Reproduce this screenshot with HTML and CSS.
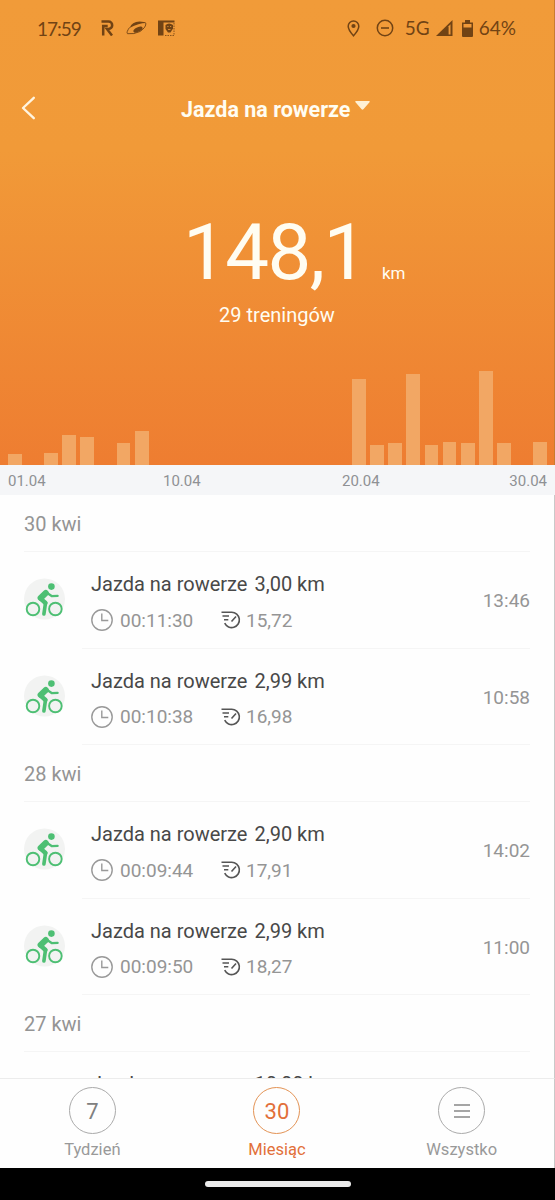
FILE: index.html
```html
<!DOCTYPE html>
<html lang="pl">
<head>
    <meta charset="UTF-8">
    <meta name="viewport" content="width=device-width, initial-scale=1.0">
    <title>Jazda na rowerze</title>
    <link rel="stylesheet" href="styles.css">
</head>
<body>
    <!-- Shared icons -->
    <svg class="icon-defs" width="0" height="0">
        <symbol id="bike" viewBox="0 0 42 42">
            <circle cx="20.5" cy="21" r="20.5" fill="#f2f3f2"/>
            <circle cx="27.4" cy="8.6" r="3.3" fill="#4dbf73"/>
            <g fill="none" stroke="#4dbf73" stroke-linecap="round" stroke-linejoin="round">
                <circle cx="9" cy="31" r="6.3" stroke-width="1.9"/>
                <circle cx="31.4" cy="31" r="6.3" stroke-width="1.9"/>
                <path d="M22.8 14.8L28 18.2 33.600 17.900" stroke-width="2.300"/>
                <path d="M21.800 15L16.600 20" stroke-width="6"/>
                <path d="M16.600 20.600L21.500 25" stroke-width="4.400"/>
                <path d="M21.500 25L19.900 36" stroke-width="3.600"/>
            </g>
        </symbol>
        <symbol id="clock" viewBox="0 0 22 22">
            <g fill="none" stroke="#999" stroke-width="1.4">
                <circle cx="11" cy="11" r="10.2"/>
                <path d="M10.8 4.5v7h6.5"/>
            </g>
        </symbol>
        <symbol id="speed" viewBox="0 0 20 18">
            <g fill="none" stroke="#555" stroke-width="1.6">
                <path d="M.5 1.2h10.200a7.700 7.700 0 1 1-7 11"/>
                <path d="M1.500 5h6.500M3 8.700h4.300M10.500 10.500l4.500-5"/>
            </g>
        </symbol>
    </svg>

    <div class="screen">
        <header class="summary">
            <div class="status-bar">
                <div class="status-left">
                    <span class="status-time">17:59</span>
                    <svg class="ico-r" width="13" height="16" viewBox="0 0 13 16"><path d="M.5 1.600h7a3.600 3.600 0 0 1 0 7.400H6l5 6.500M2.200 15.500V6h4.500" fill="none" stroke="#714314" stroke-width="2.500"/></svg>
                    <svg class="ico-orbit" width="21" height="14" viewBox="0 0 21 14"><path d="M3.500 7Q6 .5 13.500.5 19 .5 20 2 13 2 3.500 7z" fill="#714314"/><path d="M3.500 6.500Q0 11.500 1.500 12.700 8 13.500 14 10.500 20.500 6 19.800 2" fill="none" stroke="#714314" stroke-width=".9"/><ellipse cx="12" cy="8.600" rx="5" ry="2.200" transform="rotate(-26 12 8.600)" fill="#714314"/></svg>
                    <svg width="17" height="16" viewBox="0 0 17 16"><path d="M0 .5h16.500v2H5.500v13H0z" fill="#714314"/><path d="M7.500 5q3.500-3 7.500 0v3.500L12.500 12.500h-2.500L7.500 9z" fill="#714314"/><path d="M9.300 6.500h1.200M12 6.500h1.200M10 9.500h2.500" stroke="#f09a3a" stroke-width=".8"/><path d="M16 3v12.500H6" fill="none" stroke="#714314" stroke-width=".8" stroke-dasharray="1.500 1"/></svg>
                </div>
                <div class="status-right">
                    <svg class="ico-pin" width="13" height="17" viewBox="0 0 13 17"><path d="M6.500 1A5.300 5.300 0 0 0 1.200 6.300C1.200 10 6.500 15.800 6.500 15.800S11.800 10 11.800 6.300A5.300 5.300 0 0 0 6.500 1z" fill="none" stroke="#714314" stroke-width="1.500"/><circle cx="6.500" cy="6" r="2.100" fill="#714314"/></svg>
                    <svg class="ico-dnd" width="18" height="18" viewBox="0 0 18 18"><circle cx="9" cy="9" r="7.700" fill="none" stroke="#714314" stroke-width="1.500"/><path d="M5 9h8" stroke="#714314" stroke-width="1.600"/></svg>
                    <span class="network">5G</span>
                    <svg class="ico-signal" width="17" height="16" viewBox="0 0 17 16"><path d="M0 16L16.500 0V16z" fill="#714314"/><path d="M12.600 6.300l1.900-2V14.500h-1.900z" fill="#f09a3a"/></svg>
                    <svg class="ico-battery" width="11" height="17" viewBox="0 0 11 17"><path d="M0 2.500h3V0h5v2.500h3V16q0 1-1 1H1q-1 0-1-1z" fill="#714314"/><path d="M1.500 4h8v3.500h-8z" fill="#f09a3a"/></svg>
                    <span class="percent">64%</span>
                </div>
            </div>

            <nav class="title-bar">
                <svg class="back" width="15" height="24" viewBox="0 0 15 24"><path d="M12.800 1.800L2 12l10.800 10.200" fill="none" stroke="#fff4df" stroke-width="2.400" stroke-linecap="round" stroke-linejoin="round"/></svg>
                <h1>Jazda na rowerze</h1>
                <svg class="caret" width="15" height="9" viewBox="0 0 15 9"><path d="M.8 0h13.400q1 .4.300 1.200L8.400 8.300q-.9.800-1.800 0L.5 1.200Q-.1.300.8 0z" fill="#fff0d4"/></svg>
            </nav>

            <div class="total">
                <span class="total-value">148,1</span>
                <span class="total-unit">km</span>
            </div>
            <p class="count">29 treningów</p>

            <!-- One column per day of the month -->
            <div class="chart">
                <i style="height: 11px"></i>
                <i></i>
                <i style="height: 12px"></i>
                <i style="height: 30px"></i>
                <i style="height: 28px"></i>
                <i></i>
                <i style="height: 22px"></i>
                <i style="height: 34px"></i>
                <i></i><i></i><i></i><i></i><i></i><i></i><i></i><i></i><i></i><i></i><i></i>
                <i style="height: 86px"></i>
                <i style="height: 20px"></i>
                <i style="height: 22px"></i>
                <i style="height: 91px"></i>
                <i style="height: 20px"></i>
                <i style="height: 23px"></i>
                <i style="height: 22px"></i>
                <i style="height: 94px"></i>
                <i style="height: 22px"></i>
                <i></i>
                <i style="height: 23px"></i>
            </div>
        </header>

        <div class="axis">
            <span>01.04</span>
            <span>10.04</span>
            <span>20.04</span>
            <span>30.04</span>
        </div>

        <main class="list">
            <h2>30 kwi</h2>
            <article class="workout">
                <svg class="bike"><use href="#bike"/></svg>
                <div class="info">
                    <div class="name"><span>Jazda na rowerze</span><span>3,00 km</span></div>
                    <div class="stats">
                        <svg class="clock"><use href="#clock"/></svg><span class="duration">00:11:30</span>
                        <svg class="speed"><use href="#speed"/></svg><span>15,72</span>
                    </div>
                </div>
                <time>13:46</time>
            </article>
            <article class="workout">
                <svg class="bike"><use href="#bike"/></svg>
                <div class="info">
                    <div class="name"><span>Jazda na rowerze</span><span>2,99 km</span></div>
                    <div class="stats">
                        <svg class="clock"><use href="#clock"/></svg><span class="duration">00:10:38</span>
                        <svg class="speed"><use href="#speed"/></svg><span>16,98</span>
                    </div>
                </div>
                <time>10:58</time>
            </article>

            <h2>28 kwi</h2>
            <article class="workout">
                <svg class="bike"><use href="#bike"/></svg>
                <div class="info">
                    <div class="name"><span>Jazda na rowerze</span><span>2,90 km</span></div>
                    <div class="stats">
                        <svg class="clock"><use href="#clock"/></svg><span class="duration">00:09:44</span>
                        <svg class="speed"><use href="#speed"/></svg><span>17,91</span>
                    </div>
                </div>
                <time>14:02</time>
            </article>
            <article class="workout">
                <svg class="bike"><use href="#bike"/></svg>
                <div class="info">
                    <div class="name"><span>Jazda na rowerze</span><span>2,99 km</span></div>
                    <div class="stats">
                        <svg class="clock"><use href="#clock"/></svg><span class="duration">00:09:50</span>
                        <svg class="speed"><use href="#speed"/></svg><span>18,27</span>
                    </div>
                </div>
                <time>11:00</time>
            </article>

            <h2>27 kwi</h2>
            <article class="workout">
                <div class="bike"></div>
                <div class="info">
                    <div class="name"><span>Jazda na rowerze</span><span>10,00 km</span></div>
                </div>
            </article>
        </main>

        <nav class="tabs">
            <div class="tab">
                <span class="circle">7</span>
                <span>Tydzień</span>
            </div>
            <div class="tab active">
                <span class="circle">30</span>
                <span>Miesiąc</span>
            </div>
            <div class="tab">
                <span class="circle menu"><svg width="16" height="14" viewBox="0 0 16 14"><path d="M0 1h16M0 7h16M0 13h16" stroke="#888" stroke-width="1.300"/></svg></span>
                <span>Wszystko</span>
            </div>
        </nav>

        <footer class="gesture-bar"><span></span></footer>
    </div>
</body>
</html>
```
FILE: styles.css
```css
* {
    box-sizing: border-box;
}
body {
    margin: 0;
    font-family: Roboto, "Liberation Sans", sans-serif;
    background-color: #fefefe;
}
h1, h2, p {
    margin: 0;
    font-weight: normal;
}
svg {
    display: block;
    flex-shrink: 0;
}
.icon-defs {
    display: none;
}
.screen {
    display: flex;
    flex-direction: column;
    width: 555px;
    height: 1200px;
    overflow: hidden;
}

/* Orange header */
.summary {
    display: flex;
    flex-direction: column;
    height: 465px;
    background: linear-gradient(#f19b39 0, #f19a38 150px, #ee7d31 465px);
    border-right: 1px solid #c87c30;
    color: #fffdf2;
}
.status-bar {
    display: flex;
    justify-content: space-between;
    align-items: center;
    height: 56px;
    padding: 0 38px 0 37px;
    font-size: 19px;
    color: #714314;
}
.status-left, .status-right {
    display: flex;
    align-items: center;
}
.status-time {
    width: 64px;
    font-family: Lato, sans-serif;
    letter-spacing: -1px;
}
.ico-r {
    margin-right: 12px;
}
.ico-orbit {
    margin-right: 11px;
}
.ico-pin {
    margin-right: 16px;
}
.ico-dnd {
    margin-right: 11px;
}
.network, .percent {
    margin-top: -2px;
    font-family: Lato, sans-serif;
}
.ico-signal {
    margin: 0 9px 0 6px;
}
.ico-battery {
    margin-right: 6px;
}
.title-bar {
    display: flex;
    align-items: center;
    height: 104px;
    padding-left: 21px;
}
.back {
    margin-right: 145px;
}
.title-bar h1 {
    margin-top: 2px;
    font-size: 21.5px;
    font-weight: bold;
}
.caret {
    margin: -5px 0 0 5px;
}
.total {
    display: flex;
    align-items: baseline;
    height: 142px;
    padding-left: 183px;
}
.total-value {
    width: 199px;
    font-size: 78px;
    line-height: 186px;
    letter-spacing: -1.6px;
}
.total-unit {
    font-size: 17px;
}
.count {
    height: 26px;
    font-size: 20px;
    line-height: 26px;
    text-align: center;
}
.chart {
    display: grid;
    grid-template-columns: repeat(30, 1fr);
    column-gap: 4.4px;
    align-items: end;
    flex: 1;
    padding: 0 7px 0 8px;
}
.chart i {
    background-color: #f2a764;
}

.axis {
    display: grid;
    grid-template-columns: 155px 179px 1fr auto;
    align-items: center;
    height: 30px;
    padding: 2px 8px 0;
    background-color: #f5f6f8;
    font-size: 15px;
    color: #8f9194;
}

/* Workouts */
.list {
    flex: 1;
    min-height: 0;
    padding: 0 24px;
    overflow: hidden;
    border-right: 1px solid #c9c9c9;
}
.list h2 {
    height: 57px;
    border-bottom: 1px solid #f5f5f5;
    font-size: 20px;
    line-height: 59px;
    color: #949494;
}
.workout {
    display: flex;
    height: 96.5px;
}
.bike {
    width: 42px;
    height: 42px;
    margin: 26px 16px 0 0;
}
.info {
    flex: 1;
    padding: 19px 0 0 9px;
    border-bottom: 1px solid #f5f5f5;
}
.name {
    display: flex;
    gap: 7px;
    font-size: 20px;
    line-height: 27px;
    color: #484848;
}
.stats {
    display: flex;
    align-items: center;
    height: 24px;
    margin-top: 10px;
    font-size: 19px;
    color: #959595;
}
.clock {
    width: 22px;
    height: 22px;
    margin-right: 7px;
}
.duration {
    width: 101px;
}
.speed {
    width: 20px;
    height: 18px;
    margin-right: 5px;
}
.workout time {
    border-bottom: 1px solid #f5f5f5;
    font-size: 19px;
    line-height: 98px;
    color: #959595;
}

/* Bottom tabs */
.tabs {
    display: grid;
    grid-template-columns: repeat(3, 1fr);
    height: 90px;
    border-top: 1px solid #ececec;
    border-right: 1px solid #c9c9c9;
    background-color: #fefefe;
}
.tab {
    display: flex;
    flex-direction: column;
    align-items: center;
    gap: 6px;
    padding-top: 8px;
    font-size: 16.5px;
    line-height: 20px;
    color: #999;
}
.circle {
    display: flex;
    justify-content: center;
    align-items: center;
    width: 47px;
    height: 47px;
    padding-top: 2px;
    border: 1px solid #aaa;
    border-radius: 50%;
    font-size: 22px;
    color: #808080;
}
.menu {
    padding-top: 0;
}
.active {
    color: #e2703a;
}
.active .circle {
    border-color: #e39355;
    color: #e2703a;
}
.gesture-bar {
    display: flex;
    justify-content: center;
    height: 32px;
    padding-top: 13px;
    background-color: #000;
}
.gesture-bar span {
    width: 146px;
    height: 6px;
    border-radius: 3px;
    background-color: #ebebeb;
}
```
